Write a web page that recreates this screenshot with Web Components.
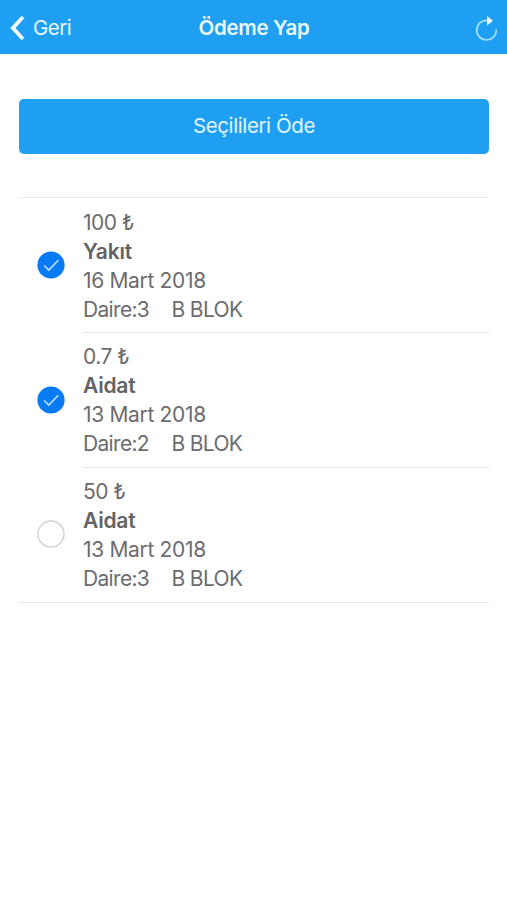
<!DOCTYPE html>
<html lang="tr">
<head>
<meta charset="utf-8">
<title>Ödeme Yap</title>
<style>
  body { margin: 0; background: #fff; font-family: Inter, Roboto, "Liberation Sans", sans-serif; }
</style>
</head>
<body>
<payment-page></payment-page>
<script>
class NavBar extends HTMLElement {
  constructor() {
    super();
    this.attachShadow({ mode: 'open' }).innerHTML = `
      <style>
        :host { display: grid; grid-template-columns: 1fr auto 1fr; align-items: center; box-sizing: border-box;
          height: 54px; padding: 0 9px 0 10px; background: #1e9ff1; color: #e9f9ff; font-size: 20.5px; line-height: 54px; }
        .back { display: flex; align-items: center; gap: 8px; letter-spacing: -.55px; padding-top: 1px; }
        .title { font-weight: 600; letter-spacing: -.3px; padding-top: 1px; }
        .reload { justify-self: end; display: block; }
        svg { display: block; }
      </style>
      <div class="back">
        <svg width="15" height="26" viewBox="0 0 15 26" fill="none" stroke="#f2fcff" stroke-width="3.8"><path d="M13 2 2.9 13 13 24"/></svg>
        <span><slot name="back"></slot></span>
      </div>
      <div class="title"><slot></slot></div>
      <svg class="reload" width="23" height="28" viewBox="0 0 23 28"><path d="M12 6.4A9.8 9.8 0 1 0 21.3 16.2" fill="none" stroke="#a5e1ff" stroke-width="1.7" stroke-linecap="round"/><path d="M12 2 18 6.8 12 11.6Z" fill="#e9faff"/></svg>`;
  }
}
class PayButton extends HTMLElement {
  constructor() {
    super();
    this.attachShadow({ mode: 'open' }).innerHTML = `
      <style>
        :host { display: block; }
        button { display: block; width: 100%; height: 55px; padding: 0 0 1px; border: 0; border-radius: 5px;
          background: #1e9ff1; color: #e0f6ff; font: 20.5px/52px Inter, Roboto, sans-serif; letter-spacing: -.4px; }
      </style>
      <button><slot></slot></button>`;
  }
}
class CheckCircle extends HTMLElement {
  connectedCallback() {
    const on = this.hasAttribute('checked');
    this.attachShadow({ mode: 'open' }).innerHTML = `
      <style>:host { display: block; } svg { display: block; }</style>
      <svg width="28" height="28" viewBox="0 0 28 28">${on
        ? '<circle cx="14" cy="14" r="13.6" fill="#087bf4"/><path d="m7.2 14.4 4.6 4.7 9.5-9.8" fill="none" stroke="#bfe4ff" stroke-width="1.5"/>'
        : '<circle cx="14" cy="14" r="13" fill="#fff" stroke="#cfcfcf" stroke-width="1.3"/>'}</svg>`;
  }
}
class PaymentRow extends HTMLElement {
  connectedCallback() {
    const checked = this.hasAttribute('checked') ? 'checked' : '';
    this.attachShadow({ mode: 'open' }).innerHTML = `
      <style>
        :host { display: grid; grid-template-columns: 64px 1fr; grid-template-rows: 100%; height: 134.67px; box-sizing: border-box; color: #6c6c6e;
          font-size: 21px; line-height: 29px; }
        .pick { display: flex; align-items: center; padding-left: 18px; }
        .info { padding-top: 10px; margin-bottom: -.8px; border-bottom: 1px solid #e9e9e9; box-sizing: border-box; white-space: nowrap; }
        :host([last]) .info { border-bottom: 0; }
        .amount { letter-spacing: -.5px; }
        .kind { font-weight: 600; color: #636366; letter-spacing: -.2px; }
        .date { letter-spacing: -.33px; }
        .place { display: flex; letter-spacing: -.67px; gap: 22.4px; }
      </style>
      <div class="pick"><check-circle ${checked}></check-circle></div>
      <div class="info">
        <div class="amount"><slot name="amount"></slot></div>
        <div class="kind"><slot name="kind"></slot></div>
        <div class="date"><slot name="date"></slot></div>
        <div class="place"><slot name="flat"></slot><slot name="block"></slot></div>
      </div>`;
  }
}
class PaymentList extends HTMLElement {
  constructor() {
    super();
    this.attachShadow({ mode: 'open' }).innerHTML = `
      <style>:host { display: block; border-top: 1px solid #ececec; border-bottom: 1px solid #e9e9e9; }</style><slot></slot>`;
  }
}
class PaymentPage extends HTMLElement {
  constructor() {
    super();
    const rows = [
      ['100 ₺', 'Yakıt', '16 Mart 2018', 'Daire:3', true],
      ['0.7 ₺', 'Aidat', '13 Mart 2018', 'Daire:2', true],
      ['50 ₺', 'Aidat', '13 Mart 2018', 'Daire:3', false]
    ];
    this.attachShadow({ mode: 'open' }).innerHTML = `
      <style>
        :host { display: block; min-height: 900px; background: #fff; }
        main { display: flex; flex-direction: column; gap: 43px; padding: 44.6px 18px 0 19px; }
      </style>
      <nav-bar><span slot="back">Geri</span>Ödeme Yap</nav-bar>
      <main>
        <pay-button>Seçilileri Öde</pay-button>
        <payment-list>${rows.map(([a, k, d, f, on], i) => `<payment-row ${on ? 'checked' : ''} ${i === 2 ? 'last' : ''}><span slot="amount">${a}</span><span slot="kind">${k}</span><span slot="date">${d}</span><span slot="flat">${f}</span><span slot="block">B BLOK</span></payment-row>`).join('')}</payment-list>
      </main>`;
  }
}
customElements.define('nav-bar', NavBar);
customElements.define('pay-button', PayButton);
customElements.define('check-circle', CheckCircle);
customElements.define('payment-row', PaymentRow);
customElements.define('payment-list', PaymentList);
customElements.define('payment-page', PaymentPage);
</script>
</body>
</html>
